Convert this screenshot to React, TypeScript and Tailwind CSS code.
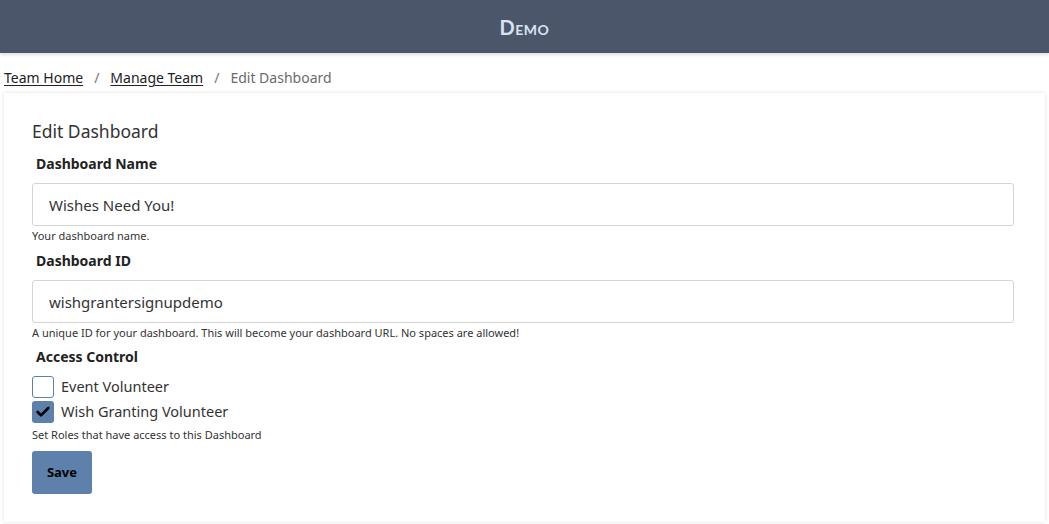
import { Check } from "lucide-react";

type RoleOption = {
  label: string;
  checked: boolean;
};

const roles: RoleOption[] = [
  { label: "Event Volunteer", checked: false },
  { label: "Wish Granting Volunteer", checked: true },
];

function Field({
  label,
  value,
  help,
}: {
  label: string;
  value: string;
  help: string;
}) {
  return (
    <div>
      <label className="block pl-1 text-[14px] font-bold text-[#222] leading-[20px] mb-[9px]">
        {label}
      </label>
      <input
        readOnly
        value={value}
        className="block w-full h-[43px] px-4 border border-[#d4d4d4] rounded-[3px] text-[15px] text-[#333] outline-none bg-white"
      />
      <div className="text-[11px] text-[#333] leading-[14px] mt-[3px]">{help}</div>
    </div>
  );
}

export default function App() {
  return (
    <div className="min-h-screen bg-white font-['Noto_Sans',sans-serif] text-[#2e3440]">
      <header className="h-[53px] bg-[#4c566a] flex items-center justify-center shadow-[0_2px_3px_rgba(0,0,0,0.12)] relative">
        <span className="font-['Lato',sans-serif] font-bold text-[20px] text-[#d8e3f0] [font-variant:small-caps] tracking-[0.5px]">
          Demo
        </span>
      </header>

      <nav className="flex items-center px-1 h-[40px] pt-[9px] text-[14px]">
        <a href="#" className="underline underline-offset-2 text-[#222]">
          Team Home
        </a>
        <span className="mx-[11px] text-[#777]">/</span>
        <a href="#" className="underline underline-offset-2 text-[#222]">
          Manage Team
        </a>
        <span className="mx-[11px] text-[#777]">/</span>
        <span className="text-[#6b6b6b]">Edit Dashboard</span>
      </nav>

      <main className="mx-1 bg-white shadow-[0_0_4px_rgba(0,0,0,0.12)] pl-[28px] pr-[31px] pt-[26px] pb-[28px]">
        <h1 className="text-[17.5px] text-[#333] leading-[24px] mb-[11px]">Edit Dashboard</h1>

        <div className="flex flex-col gap-[8px]">
          <Field label="Dashboard Name" value="Wishes Need You!" help="Your dashboard name." />
          <Field
            label="Dashboard ID"
            value="wishgrantersignupdemo"
            help="A unique ID for your dashboard. This will become your dashboard URL. No spaces are allowed!"
          />
        </div>

        <div className="mt-[7px]">
          <div className="pl-1 text-[14px] font-bold text-[#222] leading-[20px] mb-[9px]">
            Access Control
          </div>
          <div className="flex flex-col gap-[3px]">
            {roles.map((role) => (
              <label key={role.label} className="flex items-center gap-[7px] h-[22px]">
                <span
                  className={
                    role.checked
                      ? "w-[22px] h-[22px] rounded-[3px] bg-[#5e81ac] flex items-center justify-center"
                      : "w-[22px] h-[22px] rounded-[3px] border border-[#5e81ac] bg-white"
                  }
                >
                  {role.checked && <Check className="w-[16px] h-[16px] text-black" strokeWidth={4} />}
                </span>
                <span className="text-[14.5px] text-[#333]">{role.label}</span>
              </label>
            ))}
          </div>
          <div className="text-[11px] text-[#333] leading-[14px] mt-[5px]">
            Set Roles that have access to this Dashboard
          </div>
        </div>

        <button className="mt-[9px] w-[60px] h-[43px] rounded-[3px] bg-[#5e81ac] text-[13px] font-bold text-black">
          Save
        </button>
      </main>
    </div>
  );
}
